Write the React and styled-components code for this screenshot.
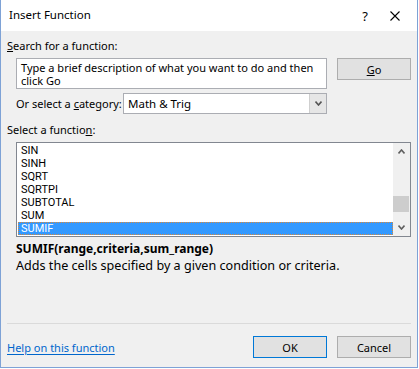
import React from "react";
import styled, { createGlobalStyle } from "styled-components";

const GlobalStyle = createGlobalStyle`
  html, body { margin: 0; padding: 0; background: #ffffff; }
  body { font-family: "Noto Sans", "Open Sans", sans-serif; font-size: 11px; color: #000; }
  * { box-sizing: border-box; }
`;

const Window = styled.div`
  width: 418px;
  height: 368px;
  border: 1px solid #7ea2d6;
  border-top: none;
  display: flex;
  flex-direction: column;
  background: #f0f0f0;
`;

const TitleBar = styled.div`
  height: 31px;
  background: #ffffff;
  display: flex;
  align-items: center;
  padding-left: 8px;
  flex-shrink: 0;
`;

const Title = styled.div`
  flex: 1;
  font-size: 11.5px;
  padding-bottom: 2px;
`;

const TitleButton = styled.div`
  width: ${(p) => p.$w}px;
  height: 30px;
  display: flex;
  align-items: center;
  justify-content: center;
  font-size: 13px;
`;

const Body = styled.div`
  flex: 1;
  display: flex;
  flex-direction: column;
  padding: 6px 6px 6px 6px;
`;

const Label = styled.div`
  line-height: 15px;
  height: 15px;
  margin-top: ${(p) => p.$mt || 0}px;
  white-space: nowrap;
`;

const U = styled.span`
  text-decoration: underline;
  text-underline-offset: 1px;
`;

const Row = styled.div`
  display: flex;
  align-items: ${(p) => p.$align || "flex-start"};
  padding-left: 9px;
  margin-top: ${(p) => p.$mt || 0}px;
`;

const SearchBox = styled.div`
  width: 311px;
  height: 31px;
  background: #fff;
  border: 1px solid #abadb3;
  padding: 2px 4px;
  line-height: 13px;
`;

const Button = styled.div`
  width: 74px;
  height: 22px;
  border: 1px solid ${(p) => (p.$default ? "#0078d7" : "#adadad")};
  background: #e1e1e1;
  display: flex;
  align-items: center;
  justify-content: center;
  margin-left: ${(p) => p.$ml || 0}px;
  flex-shrink: 0;
`;

const CategoryLabel = styled.div`
  width: 107px;
  white-space: nowrap;
`;

const Combo = styled.div`
  width: 204px;
  height: 21px;
  background: #fff;
  border: 1px solid #abadb3;
  display: flex;
  align-items: stretch;
  font-size: 11.5px;
`;

const ComboText = styled.div`
  flex: 1;
  padding-left: 4px;
  display: flex;
  align-items: center;
`;

const ComboArrow = styled.div`
  width: 17px;
  background: #e6e6e6;
  border-left: 1px solid #cfcfcf;
  display: flex;
  align-items: center;
  justify-content: center;
`;

const ListBox = styled.div`
  width: 396px;
  height: 95px;
  border: 1px solid #828790;
  background: #fff;
  display: flex;
`;

const Items = styled.div`
  flex: 1;
  padding: 1px 0 0 1px;
  display: flex;
  flex-direction: column;
`;

const Item = styled.div`
  height: 13px;
  line-height: 13px;
  padding-left: 3px;
  font-family: Roboto, "Noto Sans", sans-serif;
  font-size: 11px;
  background: ${(p) => (p.$selected ? "#3399ff" : "transparent")};
  color: ${(p) => (p.$selected ? "#fff" : "#000")};
  outline: ${(p) => (p.$selected ? "1px dotted #d9893a" : "none")};
  outline-offset: -1px;
  white-space: nowrap;
`;

const Scrollbar = styled.div`
  width: 17px;
  background: #f0f0f0;
  display: flex;
  flex-direction: column;
  align-items: stretch;
`;

const ScrollArrow = styled.div`
  height: 17px;
  display: flex;
  align-items: center;
  justify-content: center;
`;

const Track = styled.div`
  flex: 1;
  display: flex;
  flex-direction: column;
  padding-top: ${(p) => p.$top}px;
`;

const Thumb = styled.div`
  height: 16px;
  margin-right: 1px;
  background: #cdcdcd;
`;

const Signature = styled.div`
  font-weight: bold;
  font-size: 12px;
  padding-left: 9px;
  margin-top: 4px;
  line-height: 15px;
  height: 15px;
  white-space: nowrap;
`;

const Description = styled.div`
  font-size: 12.6px;
  padding-left: 9px;
  margin-top: 2px;
  line-height: 15px;
  white-space: nowrap;
`;

const Spacer = styled.div`
  flex: 1;
`;

const Separator = styled.div`
  height: 1px;
  background: #dadada;
  margin-bottom: 12px;
`;

const Footer = styled.div`
  display: flex;
  align-items: center;
  margin-bottom: 3px;
`;

const HelpLink = styled.a`
  color: #0066cc;
  text-decoration: underline;
  text-underline-offset: 2px;
  flex: 1;
  cursor: pointer;
`;

const Chevron = ({ dir, w = 7, h = 5, color = "#606060" }) => {
  const pts =
    dir === "up"
      ? `0.5,${h - 0.5} ${w / 2},1 ${w - 0.5},${h - 0.5}`
      : `0.5,0.5 ${w / 2},${h - 1} ${w - 0.5},0.5`;
  return (
    <svg width={w} height={h} viewBox={`0 0 ${w} ${h}`}>
      <polyline points={pts} fill="none" stroke={color} strokeWidth="1.6" />
    </svg>
  );
};

const items = ["SIN", "SINH", "SQRT", "SQRTPI", "SUBTOTAL", "SUM", "SUMIF"];

export default function App() {
  return (
    <>
      <GlobalStyle />
      <Window>
        <TitleBar>
          <Title>Insert Function</Title>
          <TitleButton $w={16}>?</TitleButton>
          <TitleButton $w={44}>
            <svg width="10" height="10" viewBox="0 0 10 10">
              <path d="M0.5 0.5 L9.5 9.5 M9.5 0.5 L0.5 9.5" stroke="#000" strokeWidth="1.1" />
            </svg>
          </TitleButton>
        </TitleBar>
        <Body>
          <Label $mt={1}>
            <U>S</U>earch for a function:
          </Label>
          <Row $mt={5}>
            <SearchBox>
              Type a brief description of what you want to do and then click Go
            </SearchBox>
            <Button $ml={10}>
              <span>
                <U>G</U>o
              </span>
            </Button>
          </Row>
          <Row $mt={4} $align="center">
            <CategoryLabel>
              Or select a <U>c</U>ategory:
            </CategoryLabel>
            <Combo>
              <ComboText>Math &amp; Trig</ComboText>
              <ComboArrow>
                <Chevron dir="down" w={7} h={5} color="#555" />
              </ComboArrow>
            </Combo>
          </Row>
          <Label $mt={8}>
            Select a functio<U>n</U>:
          </Label>
          <Row $mt={5}>
            <ListBox>
              <Items>
                {items.map((it) => (
                  <Item key={it} $selected={it === "SUMIF"}>
                    {it}
                  </Item>
                ))}
              </Items>
              <Scrollbar>
                <ScrollArrow>
                  <Chevron dir="up" />
                </ScrollArrow>
                <Track $top={36}>
                  <Thumb />
                </Track>
                <ScrollArrow>
                  <Chevron dir="down" />
                </ScrollArrow>
              </Scrollbar>
            </ListBox>
          </Row>
          <Signature>SUMIF(range,criteria,sum_range)</Signature>
          <Description>Adds the cells specified by a given condition or criteria.</Description>
          <Spacer />
          <Separator />
          <Footer>
            <HelpLink>Help on this function</HelpLink>
            <Button $default>OK</Button>
            <Button $ml={10}>Cancel</Button>
          </Footer>
        </Body>
      </Window>
    </>
  );
}
